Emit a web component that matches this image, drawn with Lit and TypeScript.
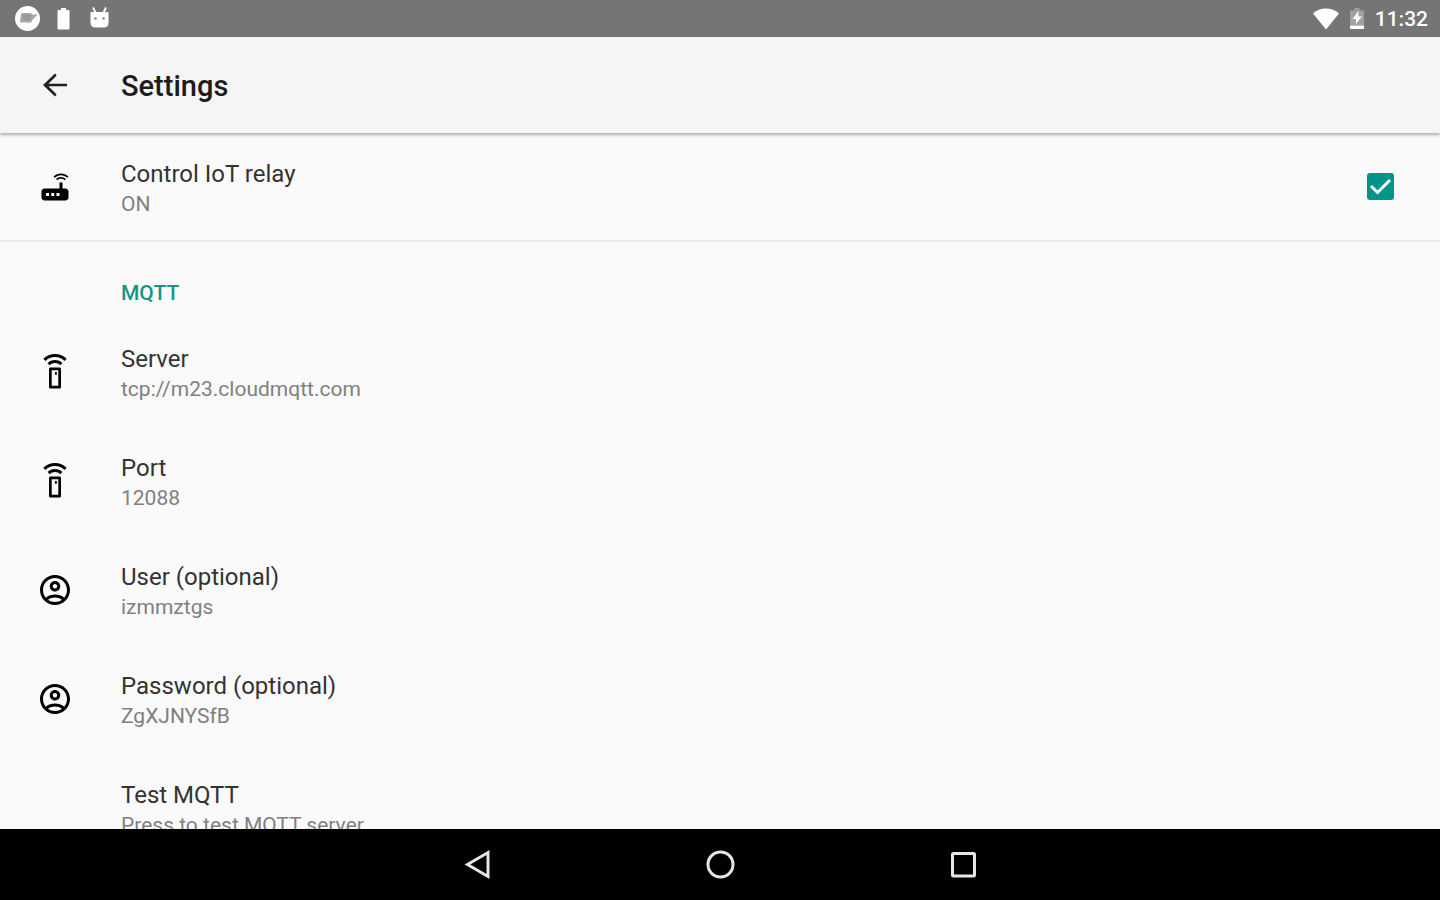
import { LitElement, html, css, svg } from "lit";
import { customElement, property, state } from "lit/decorators.js";

const glyphs = {
  router: svg`<path d="M20.2 5.9l.8-.8C19.6 3.7 17.8 3 16 3s-3.600.700-5 2.100l.8.800C13 4.800 14.500 4.200 16 4.200s3 .6 4.200 1.700zm-.9.8c-.9-.9-2.100-1.400-3.300-1.400s-2.400.5-3.300 1.400l.8.800c.7-.7 1.600-1 2.500-1 .9 0 1.800.3 2.500 1l.8-.8zM19 13h-2V9h-2v4H5c-1.100 0-2 .9-2 2v4c0 1.100.9 2 2 2h14c1.100 0 2-.9 2-2v-4c0-1.100-.9-2-2-2zM8 18H6v-2h2v2zm3.500 0h-2v-2h2v2zm3.500 0h-2v-2h2v2z"/>`,
  remote: svg`<path d="M15 9H9c-.55 0-1 .45-1 1v12c0 .55.45 1 1 1h6c.55 0 1-.45 1-1V10c0-.55-.45-1-1-1zm-.8 12.200H9.800V10.800h4.400zM12 12h1.200v1.800H12zM7.050 6.050l1.410 1.410C9.370 6.560 10.620 6 12 6s2.630.56 3.540 1.460l1.410-1.410C15.680 4.780 13.930 4 12 4s-3.680.78-4.950 2.050zM12 0C8.960 0 6.210 1.230 4.220 3.220l1.410 1.410C7.260 3.010 9.510 2 12 2s4.740 1.010 6.360 2.640l1.410-1.410C17.790 1.230 15.040 0 12 0z"/>`,
  account: svg`<path d="M12 2C6.480 2 2 6.480 2 12s4.480 10 10 10 10-4.480 10-10S17.520 2 12 2zM7.350 18.500C8.660 17.560 10.260 17 12 17s3.340.56 4.650 1.500C15.340 19.440 13.740 20 12 20s-3.340-.56-4.650-1.500zm10.790-1.380C16.450 15.800 14.320 15 12 15s-4.450.8-6.140 2.120C4.700 15.730 4 13.950 4 12c0-4.420 3.580-8 8-8s8 3.580 8 8c0 1.950-.7 3.730-1.860 5.120z"/><path d="M12 6c-1.930 0-3.500 1.570-3.500 3.500S10.070 13 12 13s3.500-1.570 3.500-3.500S13.930 6 12 6zm0 5c-.83 0-1.500-.67-1.500-1.500S11.170 8 12 8s1.500.67 1.500 1.500S12.830 11 12 11z"/>`,
  back: svg`<path d="M20 11.200H7.600l5.500-5.500L12 4.300l-8 7.700 8 7.700 1.100-1.300-5.500-5.600H20z"/>`,
  none: svg``,
};

type Glyph = keyof typeof glyphs;

@customElement("app-icon")
class AppIcon extends LitElement {
  @property() name: Glyph = "none";

  static styles = css`
    :host { display: block; width: 36px; height: 36px; }
    .glyph { display: block; width: 100%; height: 100%; fill: currentColor; }
  `;

  render() {
    return html`<svg class="glyph" viewBox="0 0 24 24" aria-hidden="true">${glyphs[this.name]}</svg>`;
  }
}

@customElement("status-bar")
class StatusBar extends LitElement {
  static styles = css`
    :host {
      display: flex; align-items: center; justify-content: space-between;
      height: 37px; padding: 0 12px 0 14px; box-sizing: border-box; flex: none;
      background: #757575; color: #fff;
    }
    .group { display: flex; align-items: center; }
    .notices { gap: 10px; }
    .system { gap: 5px; }
    .pic { display: block; width: 26px; height: 26px; }
    .time { font-size: 21px; line-height: 24px; font-weight: 500; }
  `;

  render() {
    return html`
      <div class="group notices">
        <svg class="pic" viewBox="0 0 26 26" aria-hidden="true">
          <circle cx="13.500" cy="12.500" r="12.500" fill="#fff" />
          <path d="M8 7h9l1 1.500h6l-5 4.500-2 3.500H7q-1 0-1-1.500l1-7z" fill="#a6a6a6" />
          <path d="M9 10h8M9 13h7" stroke="#858585" stroke-width="1" />
        </svg>
        <svg class="pic" viewBox="0 0 26 26" aria-hidden="true">
          <path d="M11 2h5v2h2.500q1 0 1 1v17.500q0 1-1 1h-10q-1 0-1-1V5q0-1 1-1H11z" fill="#fff" />
        </svg>
        <svg class="pic" viewBox="0 0 26 26" aria-hidden="true">
          <path d="M4.500 6h18v10.500q0 5-5 5h-8q-5 0-5-5z" fill="#fff" />
          <path d="M7 1.500l2.500 5M20 1.500l-2.500 5" stroke="#fff" stroke-width="1.800" />
          <circle cx="9.500" cy="12.500" r="1.300" fill="#858585" />
          <circle cx="17.500" cy="12.500" r="1.300" fill="#858585" />
        </svg>
      </div>
      <div class="group system">
        <svg class="pic" viewBox="0 0 26 26" aria-hidden="true">
          <path d="M13 23.500L0 7.500Q5.500 2.500 13 2.500T26 7.500z" fill="#fff" />
        </svg>
        <svg class="pic" viewBox="0 0 26 26" aria-hidden="true">
          <path d="M10.500 2h5v2.500H20v15H6v-15h4.500z" fill="#a0a0a0" />
          <path d="M14.500 5L8.500 13h3.500v5l6-7.500h-3.500z" fill="#fff" />
          <path d="M6 19.500h14v3.500H6z" fill="#fff" />
        </svg>
        <time class="time">11:32</time>
      </div>
    `;
  }
}

@customElement("nav-bar")
class NavBar extends LitElement {
  static styles = css`
    :host { display: flex; justify-content: center; flex: none; height: 71px; background: #000; }
    .key {
      flex: 0 1 243px; display: grid; place-items: center; padding: 0;
      border: 0; background: none; color: #e6e6e6;
    }
    .shape { width: 32px; height: 32px; fill: none; stroke: currentColor; stroke-width: 3; }
  `;

  render() {
    return html`
      <button class="key" aria-label="Back">
        <svg class="shape" viewBox="0 0 32 32"><path d="M27 3.500v24L6.500 15.500z" /></svg>
      </button>
      <button class="key" aria-label="Home">
        <svg class="shape" viewBox="0 0 32 32"><circle cx="16.500" cy="15.500" r="12.500" /></svg>
      </button>
      <button class="key" aria-label="Overview">
        <svg class="shape" viewBox="0 0 32 32"><rect x="5.500" y="4.500" width="22" height="22.500" rx="1" /></svg>
      </button>
    `;
  }
}

interface Preference { icon: Glyph; title: string; summary: string; }

const preferences: Preference[] = [
  { icon: "remote", title: "Server", summary: "tcp://m23.cloudmqtt.com" },
  { icon: "remote", title: "Port", summary: "12088" },
  { icon: "account", title: "User (optional)", summary: "izmmztgs" },
  { icon: "account", title: "Password (optional)", summary: "ZgXJNYSfB" },
  { icon: "none", title: "Test MQTT", summary: "Press to test MQTT server" },
];

@customElement("app-root")
class AppRoot extends LitElement {
  @state() private relayOn = true;

  static styles = css`
    :host {
      display: flex; flex-direction: column; height: 100vh; overflow: hidden;
      background: #fafafa; color: #333; font-family: Roboto, sans-serif;
    }
    .toolbar {
      display: flex; align-items: center; gap: 48px; flex: none; z-index: 1;
      height: 96px; padding: 0 37px; box-sizing: border-box;
      background: #f5f5f5; box-shadow: 0 2px 3px rgba(0, 0, 0, 0.3);
    }
    .up { padding: 0; border: 0; background: none; color: #222; }
    .heading { margin: 0; padding-top: 2px; font-size: 29px; line-height: 36px; font-weight: 500; color: #1c1c1c; }
    .list { flex: 1; min-height: 0; overflow: hidden; }
    .row {
      display: flex; align-items: center; gap: 48px; width: 100%; height: 109px;
      padding: 0 42px 0 37px; box-sizing: border-box; border: 0;
      background: none; color: inherit; font: inherit; text-align: left;
    }
    .toggle { border-bottom: 2px solid #ececec; }
    .icon { color: #000; flex: none; }
    .text { flex: 1; display: flex; flex-direction: column; min-width: 0; padding-top: 2px; }
    .title { font-size: 24px; line-height: 32px; }
    .summary { font-size: 21px; line-height: 28px; color: #808080; }
    .category {
      margin: 0; padding: 39px 0 12px 121px; font-size: 21px; line-height: 24px;
      font-weight: 500; color: #159588;
    }
    .check { display: grid; place-items: center; width: 36px; height: 36px; }
    .box, .tick { grid-area: 1 / 1; width: 27px; height: 27px; }
    .box {
      appearance: none; margin: 0; box-sizing: border-box;
      border: 3px solid #757575; border-radius: 3px;
    }
    .box:checked { background: #009587; border-color: #009587; }
    .tick { fill: none; stroke: #fff; stroke-width: 3; pointer-events: none; }
  `;

  private toggle(e: Event) {
    this.relayOn = (e.target as HTMLInputElement).checked;
  }

  render() {
    return html`
      <status-bar></status-bar>
      <header class="toolbar">
        <button class="up" aria-label="Navigate up"><app-icon name="back"></app-icon></button>
        <h1 class="heading">Settings</h1>
      </header>
      <main class="list">
        <label class="row toggle" for="relay">
          <app-icon class="icon" name="router"></app-icon>
          <span class="text">
            <span class="title">Control IoT relay</span>
            <span class="summary">${this.relayOn ? "ON" : "OFF"}</span>
          </span>
          <span class="check">
            <input class="box" id="relay" type="checkbox" .checked=${this.relayOn} @change=${this.toggle} />
            ${this.relayOn
              ? html`<svg class="tick" viewBox="0 0 27 27" aria-hidden="true"><path d="M4 13l6.500 6.500L23 7" /></svg>`
              : ""}
          </span>
        </label>
        <h2 class="category">MQTT</h2>
        ${preferences.map(
          (p) => html`
            <button class="row">
              <app-icon class="icon" name=${p.icon}></app-icon>
              <span class="text">
                <span class="title">${p.title}</span>
                <span class="summary">${p.summary}</span>
              </span>
            </button>
          `
        )}
      </main>
      <nav-bar></nav-bar>
    `;
  }
}
